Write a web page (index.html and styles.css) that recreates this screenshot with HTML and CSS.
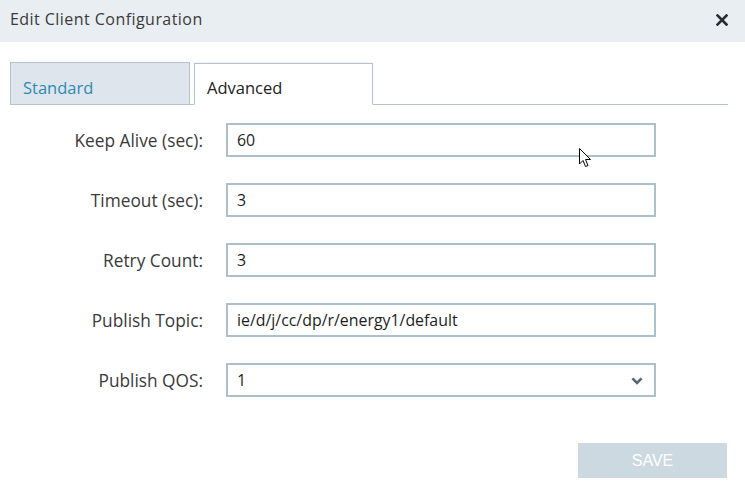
FILE: index.html
```html
<!DOCTYPE html>
<html>
<head>
<meta charset="utf-8">
<link rel="stylesheet" href="styles.css">
</head>
<body>
<div class="dialog">
  <div class="header">
    <span class="title">Edit Client Configuration</span>
    <svg class="close" width="12" height="12" viewBox="0 0 12 12"><path d="M1.5 1.5 L10.5 10.5 M10.5 1.5 L1.5 10.5" stroke="#2b2b2b" stroke-width="2.6" stroke-linecap="square"/></svg>
  </div>
  <div class="tabs">
    <div class="tab tab-inactive">Standard</div>
    <div class="tab tab-active">Advanced</div>
  </div>
  <div class="form">
    <div class="row"><div class="label">Keep Alive (sec):</div><div class="field">60</div></div>
    <div class="row"><div class="label">Timeout (sec):</div><div class="field">3</div></div>
    <div class="row"><div class="label">Retry Count:</div><div class="field">3</div></div>
    <div class="row"><div class="label">Publish Topic:</div><div class="field">ie/d/j/cc/dp/r/energy1/default</div></div>
    <div class="row"><div class="label">Publish QOS:</div><div class="field select"><span>1</span>
      <svg class="chev" width="12" height="8" viewBox="0 0 12 8"><path d="M1.4 1.4 L6 6 L10.6 1.4" fill="none" stroke="#5b6770" stroke-width="2.6"/></svg></div></div>
  </div>
  <div class="actions">
    <button class="save">SAVE</button>
  </div>
  <svg class="cursor" width="14" height="22" viewBox="0 0 14 22"><path d="M0.5 0.5 L0.5 16 L4 12.5 L6.5 18.5 L9 17.5 L6.5 11.5 L11.5 11.5 Z" fill="#fff" stroke="#000" stroke-width="1"/></svg>
</div>
</body>
</html>
```
FILE: styles.css
```css
* { box-sizing: border-box; }
html, body { margin: 0; padding: 0; background: #fff; }
body { font-family: "Open Sans", "Noto Sans", sans-serif; color: #333; }
.dialog { position: relative; width: 745px; height: 492px; }
.header {
  height: 42px; background: #e9eef2;
  display: flex; align-items: center; justify-content: space-between;
  padding: 0 17px 0 10px;
}
.title { font-size: 16px; color: #3a3a3a; letter-spacing: 0.45px; margin-top: -4px; }
.close { display: block; margin-top: -3px; }
.tabs {
  display: flex; gap: 4px; align-items: flex-end;
  margin: 21px 17px 0 10px; height: 42px;
  border-bottom: 1px solid #b4c3cd;
}
.tab {
  width: 180px; font-size: 16.5px; padding: 0 0 0 12px;
  display: flex; align-items: center;
}
.tab-inactive {
  height: 42px; background: #dee5ec; color: #2d8bb2;
  border: 1px solid #b4c3cd; border-bottom: none; padding-top: 8px;
}
.tab-active {
  height: 42px; background: #fff; color: #222; margin-bottom: -1px;
  border: 1px solid #b4c3cd; border-bottom: 1px solid #fff; padding-top: 6px;
  width: 179px; box-shadow: 0 -1px 2px rgba(0,0,0,0.06);
}
.form { padding-top: 18px; display: flex; flex-direction: column; gap: 26px; }
.row { display: flex; align-items: center; }
.label {
  width: 203px; text-align: right; font-size: 17.3px; color: #3a3a3a;
  margin-right: 23px; white-space: nowrap;
}
.field {
  width: 430px; height: 34px; border: 2px solid #adbfcb;
  display: flex; align-items: center; padding-left: 9px;
  font-size: 15.9px; color: #1e1e1e;
}
.select { justify-content: space-between; padding-right: 11px; }
.chev { display: block; margin-top: 1px; }
.actions { display: flex; justify-content: flex-end; padding: 46px 18px 0 0; }
.save {
  width: 149px; height: 35px; border: none; background: #ccd9e1; color: #fff;
  font-family: "Liberation Sans", Arial, sans-serif; font-size: 16px; padding: 0;
}
.cursor { position: absolute; left: 579px; top: 148px; }
```
